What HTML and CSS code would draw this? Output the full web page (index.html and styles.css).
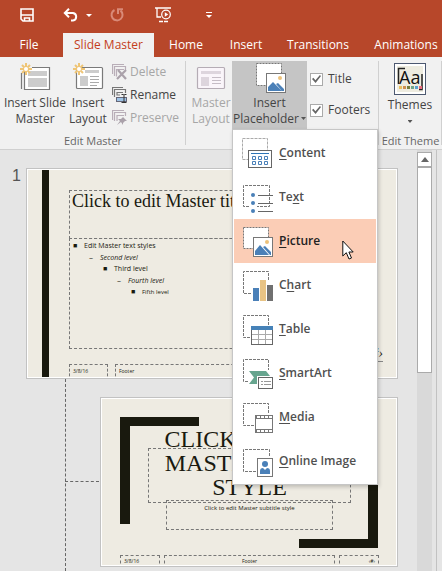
FILE: index.html
```html
<!DOCTYPE html>
<html lang="en">
<head>
<meta charset="utf-8">
<meta name="viewport" content="width=device-width, initial-scale=1">
<title>Slide Master</title>
<link rel="stylesheet" href="styles.css">
</head>
<body>
<header class="titlebar">
  <div class="quick">
    <button class="quick-btn save" aria-label="Save"><svg width="14" height="14" viewBox="0 0 14 14"><path d="M1 1H13V13H3L1 11Z" fill="none" stroke="#fff" stroke-width="1.6"/><path d="M1 7H13M4.5 13V10H9.5V13" fill="none" stroke="#fff" stroke-width="1.6"/></svg></button>
    <button class="quick-btn undo" aria-label="Undo"><svg width="30" height="14" viewBox="0 0 30 14"><path d="M1.5 5H10A3.8 3.8 0 0 1 10 12.5H8M6 .8L1.8 5L6 9.2" fill="none" stroke="#fff" stroke-width="2"/><path d="M23 6H29L26 9Z" fill="#fff"/></svg></button>
    <button class="quick-btn redo" aria-label="Redo"><svg width="14" height="14" viewBox="0 0 14 14"><path d="M4.5 2A5.5 5.5 0 1 0 10.5 2.6M8 6V1.2H13" fill="none" stroke="#d98a78" stroke-width="2"/></svg></button>
    <button class="quick-btn show" aria-label="Start slide show"><svg width="17" height="16" viewBox="0 0 17 16"><path d="M0 1H16M2 1V10H6M4 14.5H8M9 14.5H13" fill="none" stroke="#fff" stroke-width="1.3"/><circle cx="11" cy="7.5" r="4.3" fill="none" stroke="#fff" stroke-width="1.2"/><path d="M9.8 5.2L13.2 7.5L9.8 9.8Z" fill="#fff"/></svg></button>
    <button class="quick-btn more" aria-label="Customize toolbar"><svg width="6" height="6" viewBox="0 0 6 6"><path d="M0 .5H6" stroke="#fff"/><path d="M0 3H6L3 6Z" fill="#fff"/></svg></button>
  </div>
  <nav class="tabs">
    <a class="tab file" href="#">File</a>
    <a class="tab active" href="#">Slide Master</a>
    <a class="tab home" href="#">Home</a>
    <a class="tab insert" href="#">Insert</a>
    <a class="tab transitions" href="#">Transitions</a>
    <a class="tab animations" href="#">Animations</a>
  </nav>
</header>

<section class="ribbon">
  <div class="group edit-master">
    <div class="tools">
      <button class="big master"><svg width="32" height="30" viewBox="0 0 32 30"><path d="M2.5 10V26M5.5 8V26.500H30.500V4.500H13" fill="#fff" stroke="#7a7a7a" stroke-width="1.200"/><path d="M9 8H28V13H9ZM9 15H28V24H9Z" fill="#ccc"/><path d="M7 0V12M1 6H13M3 2L11 10M11 2L3 10" stroke="#efc576" stroke-width="2"/><circle cx="7" cy="6" r="2" fill="#fff"/></svg><span>Insert Slide<br>Master</span></button>
      <button class="big layout"><svg width="32" height="30" viewBox="0 0 32 30"><rect x="4.500" y="4.500" width="26" height="21" rx="1" fill="#fff" stroke="#7a7a7a" stroke-width="1.200"/><path d="M13 7H27V10H13ZM8 13H16V23H8Z" fill="#ccc"/><path d="M18 13.500H27M18 16.500H27M18 19.500H27M18 22.500H25" stroke="#aaa"/><path d="M7 0V12M1 6H13M3 2L11 10M11 2L3 10" stroke="#efc576" stroke-width="2"/><circle cx="7" cy="6" r="2" fill="#fff"/></svg><span>Insert<br>Layout</span></button>
      <div class="small-stack">
        <button class="small" disabled><svg width="16" height="16" viewBox="0 0 16 16"><path d="M.5 10V.5H12M2.500 12V2.500H13.500V6M5 12H4.500V5.500H12" fill="none" stroke="#b9aeb8" stroke-width="1.200"/><path d="M6 6L14 15M14 6L5 15" stroke="#aaa1aa" stroke-width="2.200"/></svg>Delete</button>
        <button class="small"><svg width="16" height="16" viewBox="0 0 16 16"><path d="M.5 8V.5H11M2.500 10V2.500H13.500V6M8 8H5V5.500H11" fill="none" stroke="#777" stroke-width="1.200"/><rect x="4.500" y="10.500" width="10" height="4" fill="#9dc3e6" stroke="#667"/><path d="M9.500 7.500H11.500L12 8L12.500 7.500H14.500M12 8V15M9.500 15.500H14.500" fill="none" stroke="#333"/></svg>Rename</button>
        <button class="small" disabled><svg width="16" height="16" viewBox="0 0 16 16"><path d="M.5 10V.5H12M2.500 11V2.500H13.500V6M5 11V5.500H12" fill="none" stroke="#b9aeb8" stroke-width="1.200"/><path d="M10 6L15 11L13 11L11 13L11 15L9 12L5 15L8 11L6 9H9L11 7Z" fill="#aaa1aa"/></svg>Preserve</button>
      </div>
    </div>
    <div class="group-name">Edit Master</div>
  </div>

  <div class="group master-layout">
    <button class="big layout-off" disabled><svg width="32" height="30" viewBox="0 0 32 30"><rect x="2.500" y="4.500" width="27" height="21" rx="1" fill="#faf5fa" stroke="#b5acb5" stroke-width="1.200"/><path d="M6 8H26V11H6ZM6 14H14V23H6Z" fill="#ddd5dd"/><path d="M17 14.500H26M17 17.500H26M17 20.500H26" stroke="#c5bcc5"/></svg><span>Master<br>Layout</span></button>
    <div class="dropdown">
      <button class="big placeholder"><svg width="32" height="30" viewBox="0 0 32 30"><rect x="2.500" y=".5" width="25" height="22" fill="#fff" stroke="#777" stroke-dasharray="2 1"/><rect x="12.500" y="10.500" width="19" height="19" fill="#fff" stroke="#777"/><path d="M14 28V24L19 19L28 28ZM22 21L24 20L30 26V28H28Z" fill="#4a80b8"/><circle cx="26" cy="15" r="2" fill="#edc27a"/></svg><span>Insert<br>Placeholder<i class="caret"></i></span></button>
      <div class="menu" role="menu">
        <button class="item" role="menuitem"><svg width="32" height="32" viewBox="0 0 32 32"><rect x="1.500" y="1.500" width="25" height="21" fill="none" stroke="#aaa" stroke-dasharray="3 1"/><rect x="7.500" y="13.500" width="23" height="17" fill="#fff" stroke="#666"/><path d="M10 16.500H28" stroke="#2e75b6"/><path d="M11.500 19.500h3v3h-3zM17.500 19.500h3v3h-3zM23.500 19.500h3v3h-3zM11.500 24.500h3v3h-3zM17.500 24.500h3v3h-3zM23.500 24.500h3v3h-3z" fill="#fff" stroke="#4a80b8"/></svg><span><u>C</u>ontent</span></button>
        <button class="item" role="menuitem"><svg width="32" height="32" viewBox="0 0 32 32"><path d="M8 25.500H2.500V4.500H28.500V25.500H16" fill="none" stroke="#777" stroke-dasharray="3 1"/><path d="M17 14.500H32M17 22.500H32M17 30.500H32" stroke="#666"/><g fill="#4a80b8"><circle cx="12" cy="14" r="2"/><circle cx="12" cy="22" r="2"/><circle cx="12" cy="30" r="2"/></g></svg><span>Te<u>x</u>t</span></button>
        <button class="item selected" role="menuitem"><svg width="32" height="32" viewBox="0 0 32 32"><rect x="2.500" y="2.500" width="25" height="21" fill="#fff" stroke="#777" stroke-dasharray="2 1"/><rect x="12.500" y="12.500" width="19" height="19" fill="#fff" stroke="#777"/><path d="M14 30V26L19 20L28 30ZM22 22L24 21L30 27V30H29Z" fill="#4a80b8"/><circle cx="26" cy="17" r="2" fill="#edc27a"/></svg><span><u>P</u>icture</span></button>
        <button class="item" role="menuitem"><svg width="32" height="32" viewBox="0 0 32 32"><path d="M10 24.500H2.500V2.500H27.500V11" fill="none" stroke="#777" stroke-dasharray="3 1"/><path d="M12 19H18V32H12Z" fill="#4a80b8"/><path d="M19 11H25V32H19Z" fill="#e8c384"/><path d="M26 16H32V32H26Z" fill="#707070"/></svg><span>C<u>h</u>art</span></button>
        <button class="item" role="menuitem"><svg width="32" height="32" viewBox="0 0 32 32"><path d="M9 24.500H2.500V2.500H27.500V13" fill="none" stroke="#777" stroke-dasharray="3 1"/><rect x="10.500" y="13.500" width="21" height="18" fill="#fff" stroke="#666"/><path d="M10 13H32V17H10Z" fill="#4682b8"/><path d="M17.500 17V31M24.500 17V31M11 21.500H31M11 26.500H31" stroke="#aaa"/></svg><span><u>T</u>able</span></button>
        <button class="item" role="menuitem"><svg width="32" height="32" viewBox="0 0 32 32"><path d="M7 24.500H2.500V2.500H27.500V13" fill="none" stroke="#777" stroke-dasharray="3 1"/><path d="M8 14H25L29 19H16V27H8L13 20.500Z" fill="#67a58f"/><rect x="17.500" y="20.500" width="14" height="11" fill="#fff" stroke="#666"/><path d="M20 24.500H22M23 24.500H30M20 27.500H22M23 27.500H30" stroke="#999"/></svg><span><u>S</u>martArt</span></button>
        <button class="item" role="menuitem"><svg width="32" height="32" viewBox="0 0 32 32"><path d="M13 24.500H2.500V2.500H27.500V13" fill="none" stroke="#777" stroke-dasharray="3 1"/><rect x="14.500" y="14.500" width="17" height="17" fill="#fff" stroke="#777"/><path d="M14 16H32M14 30H32" stroke="#777" stroke-width="4"/><path d="M16 16H31M16 30H31" stroke="#fff" stroke-width="2" stroke-dasharray="3 1"/></svg><span><u>M</u>edia</span></button>
        <button class="item" role="menuitem"><svg width="32" height="32" viewBox="0 0 32 32"><path d="M15 26.500H2.500V4.500H28.500V12" fill="none" stroke="#777" stroke-dasharray="3 1"/><rect x="16.500" y="13.500" width="15" height="18" fill="#fff" stroke="#777"/><circle cx="24" cy="19" r="3" fill="#4a80b8"/><path d="M19 29V26Q19 23 22 23L24 25L26 23Q29 23 29 26V29Z" fill="#4a80b8"/></svg><span><u>O</u>nline Image</span></button>
        <svg class="pointer" width="12" height="20" viewBox="0 0 12 20"><path d="M.8 1V16L4.300 12.700L7 19L9.500 18L6.900 12H11.200Z" fill="#fff" stroke="#111"/></svg>
      </div>
    </div>
    <div class="checks">
      <label class="check"><input type="checkbox" checked>Title</label>
      <label class="check"><input type="checkbox" checked>Footers</label>
    </div>
  </div>

  <div class="group edit-theme">
    <button class="big themes"><svg width="32" height="32" viewBox="0 0 32 32"><rect x=".5" y=".5" width="31" height="31" fill="#fff" stroke="#4c5870"/><path d="M3 3H29V29H3Z" fill="#eeece0"/><path d="M4.500 21V5.500H11M28 11V26.500H25" fill="none" stroke="#222" stroke-width="1.500"/><text x="5" y="21" class="aa">Aa</text><path d="M5 23h3v3H5z" fill="#e8c060"/><path d="M9 23h3v3H9z" fill="#d09050"/><path d="M13 23h3v3h-3z" fill="#77803f"/><path d="M17 23h3v3h-3z" fill="#6fa58a"/><path d="M21 23h3v3h-3z" fill="#5aa0d0"/><path d="M25 23h3v3h-3z" fill="#e86a7c"/></svg><span>Themes</span><i class="caret"></i></button>
    <div class="group-name">Edit Theme</div>
  </div>
</section>

<main class="workspace">
  <div class="thumbs">
    <div class="row">
      <span class="number">1</span>
      <div class="slide first">
        <div class="bar"></div>
        <div class="box title">Click to edit Master title style</div>
        <ul class="box levels">
          <li class="l1">Edit Master text styles</li>
          <li class="l2">Second level</li>
          <li class="l3">Third level</li>
          <li class="l4">Fourth level</li>
          <li class="l5">Fifth level</li>
        </ul>
        <div class="box date">3/8/16</div>
        <div class="box foot">Footer</div>
        <div class="page-no">‹#›</div>
      </div>
    </div>
    <div class="row child">
      <div class="slide second">
        <div class="corner top"></div>
        <div class="corner bottom"></div>
        <div class="box heading">CLICK TO EDIT<br>MASTER TITLE<br>STYLE</div>
        <div class="box subtitle">Click to edit Master subtitle style</div>
        <div class="box date">3/8/16</div>
        <div class="box foot">Footer</div>
        <div class="box num">‹#›</div>
      </div>
    </div>
  </div>
  <div class="scroll">
    <button class="up" aria-label="Scroll up"><svg width="8" height="5" viewBox="0 0 8 5"><path d="M0 5L4 0L8 5Z" fill="#666"/></svg></button>
    <div class="thumb"></div>
  </div>
  <div class="edge"></div>
</main>
</body>
</html>
```
FILE: styles.css
```css
* { box-sizing: border-box; }
body {
  margin: 0;
  min-height: 100vh;
  display: flex;
  flex-direction: column;
  overflow: hidden;
  background: #e5e5e5;
  color: #444;
  font: 12px/16px "Open Sans", "Noto Sans", sans-serif;
}
button {
  margin: 0;
  padding: 0;
  border: 0;
  background: none;
  color: inherit;
  font: inherit;
}
svg { display: block; flex: none; }

.titlebar { background: #b7472a; }
.quick { display: flex; align-items: center; height: 33px; padding: 0 0 3px 20px; }
.undo { margin-left: 29px; }
.redo { margin-left: 17px; }
.show { margin-left: 31px; }
.more { margin-left: 34px; }
.tabs { display: flex; height: 24px; overflow: hidden; white-space: nowrap; }
.tab {
  flex: none;
  padding-top: 4px;
  color: #fff;
  text-align: center;
  text-decoration: none;
}
.file { width: 58px; margin-right: 5px; }
.active { width: 91px; background: #f1f1f1; color: #c43e1c; }
.home { width: 64px; }
.insert { width: 56px; }
.transitions { width: 88px; }
.animations { width: 88px; }

.ribbon {
  display: flex;
  height: 93px;
  background: #f1f1f1;
  border-bottom: 1px solid #d0d0d0;
}
.group { position: relative; flex: none; padding-top: 4px; }
.group::after {
  content: "";
  position: absolute;
  top: 4px;
  right: 0;
  bottom: 4px;
  width: 1px;
  background: #d0d0d0;
}
.edit-master { width: 186px; }
.master-layout { display: flex; width: 193px; padding-left: 4px; }
.edit-theme { width: 63px; }
.tools { display: flex; height: 72px; }
.group-name { text-align: center; white-space: nowrap; color: #666; font-size: 11px; }
.big {
  display: flex;
  flex-direction: column;
  align-items: center;
  gap: 2px;
  height: 68px;
  padding-top: 2px;
  white-space: nowrap;
}
.big:disabled, .small:disabled { color: #a6a6a6; }
.master { width: 70px; }
.layout { width: 36px; }
.layout-off { width: 42px; }
.small-stack { display: flex; flex-direction: column; gap: 7px; padding: 3px 0 0 6px; }
.small { display: flex; align-items: center; gap: 2px; height: 16px; }
.caret {
  display: inline-block;
  width: 5px;
  height: 3px;
  margin-left: 2px;
  vertical-align: 3px;
  background: #555;
  clip-path: polygon(0 0, 100% 0, 50% 100%);
}
.dropdown { position: relative; width: 75px; }
.placeholder { width: 75px; background: #c5c5c5; }
.checks { display: flex; flex-direction: column; gap: 15px; padding: 10px 0 0 3px; }
.check { display: flex; align-items: center; gap: 5px; height: 16px; }
.check input {
  appearance: none;
  width: 13px;
  height: 13px;
  margin: 0;
  border: 1px solid #aaa;
  background: #fff;
  display: grid;
  place-items: center;
}
.check input::before {
  content: "";
  width: 9px;
  height: 8px;
  background: #666;
  clip-path: polygon(0 50%, 15% 35%, 38% 65%, 88% 0, 100% 12%, 40% 100%);
}
.themes { width: 62px; gap: 2px; height: 72px; }
.themes .caret { margin: 5px 0 0; }
.aa { font: 18px "Open Sans", sans-serif; fill: #111; }

.menu {
  position: absolute;
  z-index: 5;
  top: 68px;
  left: 0;
  width: 146px;
  padding: 1px;
  border: 1px solid #c6c6c6;
  background: #fff;
  box-shadow: 1px 2px 4px #0003;
}
.item {
  display: flex;
  align-items: center;
  gap: 6px;
  width: 100%;
  height: 44px;
  padding-left: 7px;
  color: #505050;
  font-weight: 600;
  text-align: left;
}
.selected { background: #fbcdb6; color: #222; }
.item u { text-underline-offset: 2px; }
.pointer { position: absolute; top: 110px; left: 109px; }

.workspace { display: flex; flex: 1; min-height: 421px; color: #1a1a10; }
.thumbs { position: relative; flex: 1; padding: 18px 19px 0 0; }
.thumbs::before {
  content: "";
  position: absolute;
  top: 229px;
  bottom: 0;
  left: 65px;
  border-left: 1px dashed #666;
}
.row { display: flex; position: relative; }
.number { width: 26px; padding-left: 12px; color: #555; font: 16px/16px "Liberation Sans", sans-serif; }
.child { margin-top: 18px; padding-left: 100px; }
.child::before {
  content: "";
  position: absolute;
  top: 84px;
  left: 65px;
  width: 34px;
  border-top: 1px dashed #666;
}
.slide {
  position: relative;
  flex: 1;
  overflow: hidden;
  border: 1px solid #c2c2c2;
  background: #eeebe2;
  box-shadow: inset 0 0 0 1px #fff;
}
.first { height: 211px; }
.second { height: 170px; }
.bar { position: absolute; top: 1px; bottom: 1px; left: 15px; width: 7px; background: #19190e; }
.box { position: absolute; margin: 0; border: 1px dashed #777; white-space: nowrap; }
.title {
  top: 21px;
  left: 42px;
  right: 24px;
  height: 49px;
  padding: 0 2px;
  font: 18px/20px "Liberation Serif", serif;
}
.levels {
  top: 69px;
  left: 42px;
  right: 24px;
  height: 111px;
  padding: 1px 3px;
  list-style: none;
  font: 7px/11px "Open Sans", sans-serif;
}
.levels li::before { content: "■"; display: inline-block; width: 11px; font-size: 7px; font-style: normal; }
.levels .l2::before, .levels .l4::before { content: "–"; font-size: 8px; }
.l2 { padding-left: 16px; font-style: italic; }
.l3 { padding-left: 30px; }
.l4 { padding-left: 44px; font-style: italic; }
.levels .l5 { padding-left: 58px; font-size: 6px; }
.date, .foot, .num { bottom: -3px; padding: 2px 3px; font: 5px/8px "Open Sans", sans-serif; }
.first .date { left: 42px; width: 39px; height: 17px; }
.first .foot { left: 88px; width: 190px; height: 17px; }
.page-no { position: absolute; right: 14px; bottom: 16px; border-bottom: 1px solid #888; font: italic 14px/14px "Liberation Serif", serif; }
.corner { position: absolute; border: 0 solid #19190e; }
.top { top: 19px; left: 19px; width: 79px; height: 107px; border-width: 9px 0 0 10px; }
.bottom { right: 19px; bottom: 18px; width: 79px; height: 107px; border-width: 0 10px 9px 0; }
.heading {
  top: 50px;
  left: 47px;
  right: 46px;
  height: 55px;
  display: flex;
  align-items: flex-end;
  justify-content: center;
  padding-bottom: 3px;
  font: 24px/24px "Liberation Serif", serif;
  text-align: center;
}
.subtitle {
  top: 102px;
  left: 65px;
  right: 64px;
  height: 30px;
  padding-top: 2px;
  font: 6px/10px "Open Sans", sans-serif;
  text-align: center;
}
.second .date, .second .foot, .second .num { height: 14px; padding-top: 1px; }
.second .date { left: 19px; width: 40px; }
.second .foot { left: 63px; right: 62px; text-align: center; }
.second .num { right: 18px; width: 40px; text-align: right; }

.scroll { width: 15px; padding-top: 2px; background: #d9d9d9; }
.up { display: grid; place-items: center; width: 15px; height: 15px; border: 1px solid #aaa; background: #fff; }
.thumb { height: 206px; border: 1px solid #aaa; background: #fff; }
.edge { width: 6px; margin-left: 4px; border-left: 1px solid #c2c2c2; }
```
